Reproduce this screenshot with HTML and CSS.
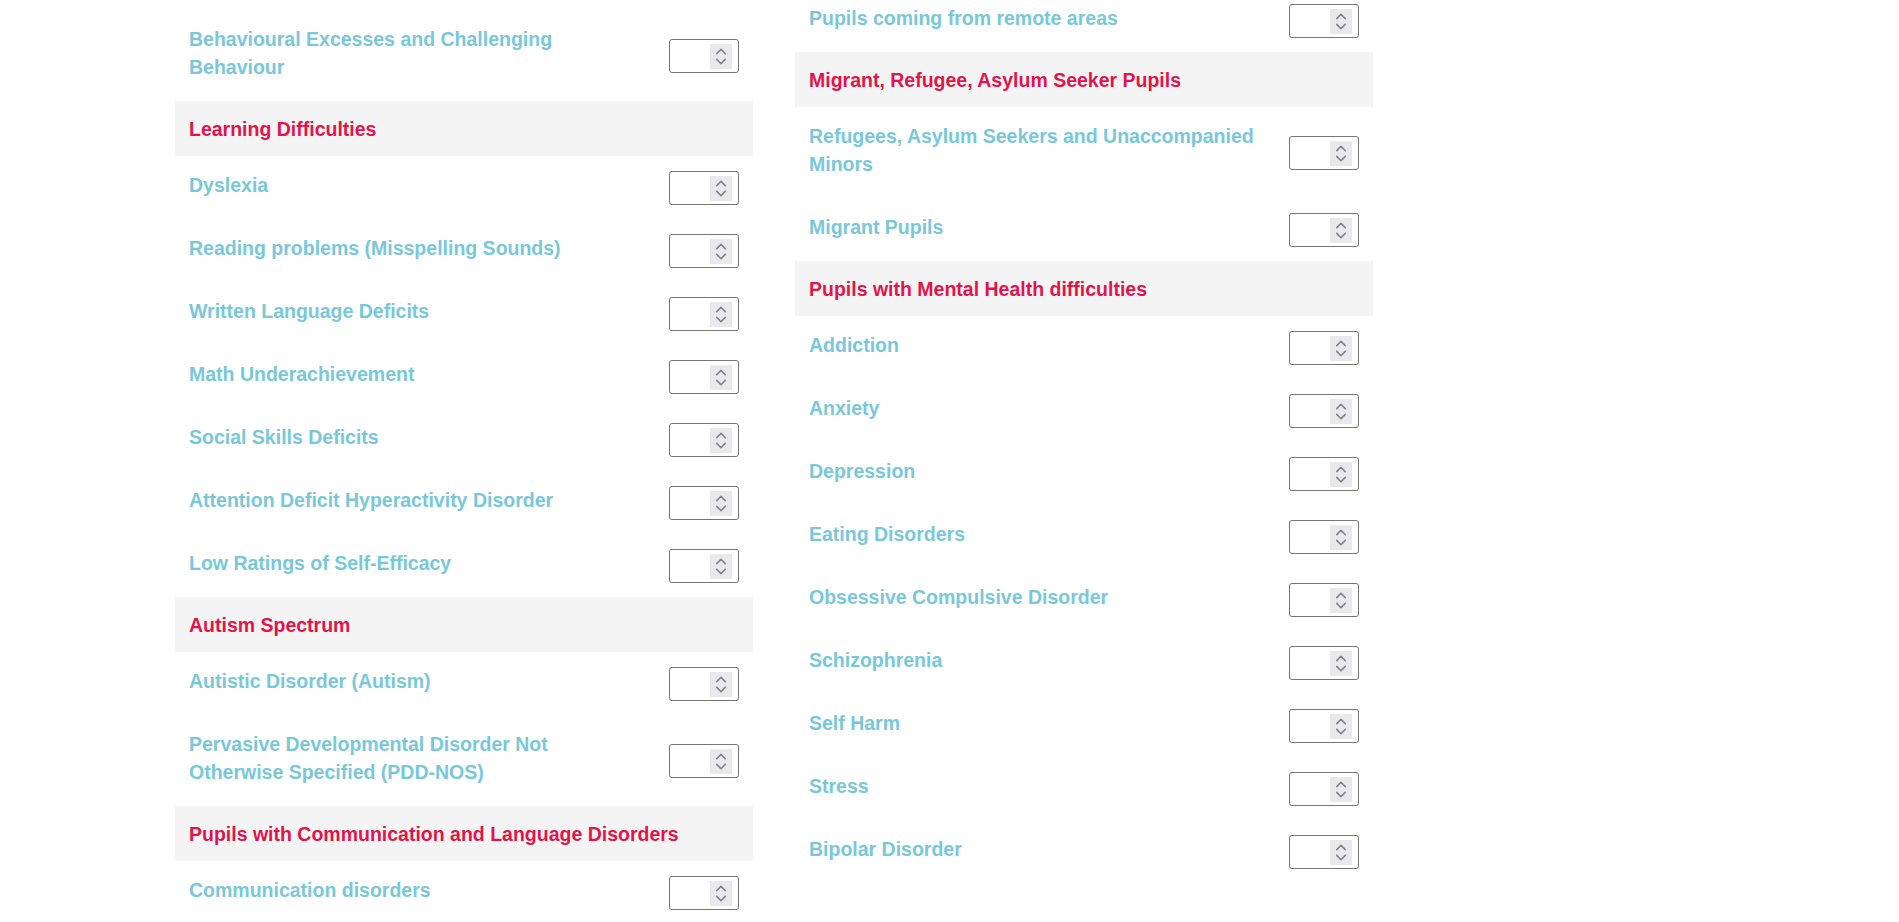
FILE: index.html
```html
<!DOCTYPE html>
<html lang="en">
<head>
	<meta charset="UTF-8">
	<title>Pupils needs</title>
	<link rel="stylesheet" href="styles.css">
</head>
<body>
	<div class="survey">
		<div class="col col-left">
			<div class="item"><label>Behavioural Excesses and Challenging Behaviour</label><span class="count"><input type="number"><span class="spin"><svg viewBox="0 0 22 25"><path d="M6.8 9.6l4.2-4.3 4.2 4.3M6.8 15.4l4.2 4.3 4.2-4.3"/></svg></span></span></div>
			<h4 class="group">Learning Difficulties</h4>
			<div class="item"><label>Dyslexia</label><span class="count"><input type="number"><span class="spin"><svg viewBox="0 0 22 25"><path d="M6.8 9.6l4.2-4.3 4.2 4.3M6.8 15.4l4.2 4.3 4.2-4.3"/></svg></span></span></div>
			<div class="item"><label>Reading problems (Misspelling Sounds)</label><span class="count"><input type="number"><span class="spin"><svg viewBox="0 0 22 25"><path d="M6.8 9.6l4.2-4.3 4.2 4.3M6.8 15.4l4.2 4.3 4.2-4.3"/></svg></span></span></div>
			<div class="item"><label>Written Language Deficits</label><span class="count"><input type="number"><span class="spin"><svg viewBox="0 0 22 25"><path d="M6.8 9.6l4.2-4.3 4.2 4.3M6.8 15.4l4.2 4.3 4.2-4.3"/></svg></span></span></div>
			<div class="item"><label>Math Underachievement</label><span class="count"><input type="number"><span class="spin"><svg viewBox="0 0 22 25"><path d="M6.8 9.6l4.2-4.3 4.2 4.3M6.8 15.4l4.2 4.3 4.2-4.3"/></svg></span></span></div>
			<div class="item"><label>Social Skills Deficits</label><span class="count"><input type="number"><span class="spin"><svg viewBox="0 0 22 25"><path d="M6.8 9.6l4.2-4.3 4.2 4.3M6.8 15.4l4.2 4.3 4.2-4.3"/></svg></span></span></div>
			<div class="item"><label>Attention Deficit Hyperactivity Disorder</label><span class="count"><input type="number"><span class="spin"><svg viewBox="0 0 22 25"><path d="M6.8 9.6l4.2-4.3 4.2 4.3M6.8 15.4l4.2 4.3 4.2-4.3"/></svg></span></span></div>
			<div class="item"><label>Low Ratings of Self-Efficacy</label><span class="count"><input type="number"><span class="spin"><svg viewBox="0 0 22 25"><path d="M6.8 9.6l4.2-4.3 4.2 4.3M6.8 15.4l4.2 4.3 4.2-4.3"/></svg></span></span></div>
			<h4 class="group">Autism Spectrum</h4>
			<div class="item"><label>Autistic Disorder (Autism)</label><span class="count"><input type="number"><span class="spin"><svg viewBox="0 0 22 25"><path d="M6.8 9.6l4.2-4.3 4.2 4.3M6.8 15.4l4.2 4.3 4.2-4.3"/></svg></span></span></div>
			<div class="item"><label>Pervasive Developmental Disorder Not Otherwise Specified (PDD-NOS)</label><span class="count"><input type="number"><span class="spin"><svg viewBox="0 0 22 25"><path d="M6.8 9.6l4.2-4.3 4.2 4.3M6.8 15.4l4.2 4.3 4.2-4.3"/></svg></span></span></div>
			<h4 class="group">Pupils with Communication and Language Disorders</h4>
			<div class="item"><label>Communication disorders</label><span class="count"><input type="number"><span class="spin"><svg viewBox="0 0 22 25"><path d="M6.8 9.6l4.2-4.3 4.2 4.3M6.8 15.4l4.2 4.3 4.2-4.3"/></svg></span></span></div>
		</div>
		<div class="col col-right">
			<div class="item"><label>Pupils coming from remote areas</label><span class="count"><input type="number"><span class="spin"><svg viewBox="0 0 22 25"><path d="M6.8 9.6l4.2-4.3 4.2 4.3M6.8 15.4l4.2 4.3 4.2-4.3"/></svg></span></span></div>
			<h4 class="group">Migrant, Refugee, Asylum Seeker Pupils</h4>
			<div class="item"><label>Refugees, Asylum Seekers and Unaccompanied Minors</label><span class="count"><input type="number"><span class="spin"><svg viewBox="0 0 22 25"><path d="M6.8 9.6l4.2-4.3 4.2 4.3M6.8 15.4l4.2 4.3 4.2-4.3"/></svg></span></span></div>
			<div class="item"><label>Migrant Pupils</label><span class="count"><input type="number"><span class="spin"><svg viewBox="0 0 22 25"><path d="M6.8 9.6l4.2-4.3 4.2 4.3M6.8 15.4l4.2 4.3 4.2-4.3"/></svg></span></span></div>
			<h4 class="group">Pupils with Mental Health difficulties</h4>
			<div class="item"><label>Addiction</label><span class="count"><input type="number"><span class="spin"><svg viewBox="0 0 22 25"><path d="M6.8 9.6l4.2-4.3 4.2 4.3M6.8 15.4l4.2 4.3 4.2-4.3"/></svg></span></span></div>
			<div class="item"><label>Anxiety</label><span class="count"><input type="number"><span class="spin"><svg viewBox="0 0 22 25"><path d="M6.8 9.6l4.2-4.3 4.2 4.3M6.8 15.4l4.2 4.3 4.2-4.3"/></svg></span></span></div>
			<div class="item"><label>Depression</label><span class="count"><input type="number"><span class="spin"><svg viewBox="0 0 22 25"><path d="M6.8 9.6l4.2-4.3 4.2 4.3M6.8 15.4l4.2 4.3 4.2-4.3"/></svg></span></span></div>
			<div class="item"><label>Eating Disorders</label><span class="count"><input type="number"><span class="spin"><svg viewBox="0 0 22 25"><path d="M6.8 9.6l4.2-4.3 4.2 4.3M6.8 15.4l4.2 4.3 4.2-4.3"/></svg></span></span></div>
			<div class="item"><label>Obsessive Compulsive Disorder</label><span class="count"><input type="number"><span class="spin"><svg viewBox="0 0 22 25"><path d="M6.8 9.6l4.2-4.3 4.2 4.3M6.8 15.4l4.2 4.3 4.2-4.3"/></svg></span></span></div>
			<div class="item"><label>Schizophrenia</label><span class="count"><input type="number"><span class="spin"><svg viewBox="0 0 22 25"><path d="M6.8 9.6l4.2-4.3 4.2 4.3M6.8 15.4l4.2 4.3 4.2-4.3"/></svg></span></span></div>
			<div class="item"><label>Self Harm</label><span class="count"><input type="number"><span class="spin"><svg viewBox="0 0 22 25"><path d="M6.8 9.6l4.2-4.3 4.2 4.3M6.8 15.4l4.2 4.3 4.2-4.3"/></svg></span></span></div>
			<div class="item"><label>Stress</label><span class="count"><input type="number"><span class="spin"><svg viewBox="0 0 22 25"><path d="M6.8 9.6l4.2-4.3 4.2 4.3M6.8 15.4l4.2 4.3 4.2-4.3"/></svg></span></span></div>
			<div class="item"><label>Bipolar Disorder</label><span class="count"><input type="number"><span class="spin"><svg viewBox="0 0 22 25"><path d="M6.8 9.6l4.2-4.3 4.2 4.3M6.8 15.4l4.2 4.3 4.2-4.3"/></svg></span></span></div>
		</div>
	</div>
</body>
</html>
```

FILE: styles.css
```css
*{box-sizing: border-box;}
body{
	margin: 0;
	background: #fff;
	font-family: "Liberation Sans", Arial, sans-serif;
	overflow: hidden;
}
.survey{
	display: grid;
	grid-template-columns: 578px 578px;
	column-gap: 42px;
	align-items: start;
	margin-left: 175px;
}
.col-left{
	padding-top: 10px;
}
.col-right{
	margin-top: -11px;
}
.item{
	display: flex;
	align-items: center;
	justify-content: space-between;
	padding: 15.4px 14px 13.6px;
}
.item label{
	max-width: 450px;
	margin-bottom: 6px;
	font-size: 19.5px;
	font-weight: 700;
	line-height: 28px;
	color: #79c8da;
}
.group{
	margin: 0;
	padding: 14.5px 14px 12.5px;
	background: #f4f4f4;
	font-size: 19.5px;
	font-weight: 700;
	line-height: 28px;
	color: #e2144b;
}
.count{
	flex: none;
	display: flex;
	width: 70px;
	height: 34px;
	padding: 3.5px 6px 3.5px 2px;
	border: 1px solid #767676;
	border-radius: 3px;
	background: #fff;
}
.count input{
	flex: 1;
	min-width: 0;
	padding: 0;
	border: 0;
	outline: 0;
	background: transparent;
	font: 16px "Liberation Sans", Arial, sans-serif;
	-moz-appearance: textfield;
}
.count input::-webkit-inner-spin-button,
.count input::-webkit-outer-spin-button{
	-webkit-appearance: none;
	margin: 0;
}
.spin{
	width: 22px;
	background: #e9e9ed;
}
.spin svg{
	display: block;
	width: 22px;
	height: 25px;
	fill: none;
	stroke: #838386;
	stroke-width: 1.6;
	stroke-linecap: round;
	stroke-linejoin: round;
}
```
